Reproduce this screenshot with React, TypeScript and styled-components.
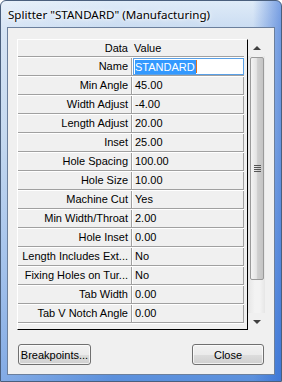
import styled, { createGlobalStyle } from 'styled-components';

const GlobalStyle = createGlobalStyle`
  html, body {
    margin: 0;
    padding: 0;
  }
  body {
    width: 282px;
    height: 382px;
    overflow: hidden;
    font-family: "Liberation Sans", Arial, sans-serif;
  }
`;

const properties: [string, string][] = [
  ['Name', 'STANDARD'],
  ['Min Angle', '45.00'],
  ['Width Adjust', '-4.00'],
  ['Length Adjust', '20.00'],
  ['Inset', '25.00'],
  ['Hole Spacing', '100.00'],
  ['Hole Size', '10.00'],
  ['Machine Cut', 'Yes'],
  ['Min Width/Throat', '2.00'],
  ['Hole Inset', '0.00'],
  ['Length Includes Ext...', 'No'],
  ['Fixing Holes on Tur...', 'No'],
  ['Tab Width', '0.00'],
  ['Tab V Notch Angle', '0.00'],
];

export default function App() {
  return (
    <>
      <GlobalStyle />
      <Window>
        <TitleBar>Splitter "STANDARD" (Manufacturing)</TitleBar>
        <Client>
          <PropertyBox>
            <Grid>
              <HeaderRow>
                <HeaderLabel>Data</HeaderLabel>
                <HeaderValue>Value</HeaderValue>
              </HeaderRow>
              {properties.map(([label, value], i) => (
                <Row key={label}>
                  <Label>{label}</Label>
                  <Divider />
                  {i === 0 ? (
                    <EditBox>
                      <Selected>{value}</Selected>
                      <Caret />
                    </EditBox>
                  ) : (
                    <Value>{value}</Value>
                  )}
                </Row>
              ))}
            </Grid>
            <ScrollBar>
              <ArrowButton>
                <Arrow $up />
              </ArrowButton>
              <Track>
                <Thumb>
                  <Grip>
                    <span />
                    <span />
                    <span />
                    <span />
                  </Grip>
                </Thumb>
              </Track>
              <ArrowButton>
                <Arrow />
              </ArrowButton>
            </ScrollBar>
          </PropertyBox>
          <ButtonRow>
            <Button $width={73}>Breakpoints...</Button>
            <Button $width={72}>Close</Button>
          </ButtonRow>
        </Client>
      </Window>
    </>
  );
}

const Window = styled.div`
  width: 282px;
  height: 382px;
  box-sizing: border-box;
  display: flex;
  flex-direction: column;
  border: 1px solid #4a5f7d;
  border-radius: 6px 6px 0 0;
  background:
    linear-gradient(to right, rgba(255, 255, 255, 0.25) 0%, rgba(255, 255, 255, 0) 40%, rgba(40, 100, 200, 0) 90%, rgba(40, 100, 210, 0.55) 100%),
    linear-gradient(to bottom, #dfebf8 0%, #c8dbf1 8%, #b3cdeb 35%, #86aee5 70%, #5a8fdc 100%);
`;

const TitleBar = styled.div`
  height: 26px;
  flex: none;
  display: flex;
  align-items: center;
  padding-left: 7px;
  font-family: "Noto Sans", "Open Sans", sans-serif;
  font-size: 11.6px;
  color: #000;
  text-shadow: 0 0 6px #fff, 0 0 3px #fff;
  white-space: nowrap;
`;

const Client = styled.div`
  flex: 1;
  margin: 0 6px 6px 6px;
  border: 1px solid #6b7f9c;
  background: #f0f0f0;
  padding: 11px 9px 9px 9px;
  display: flex;
  flex-direction: column;
`;

const PropertyBox = styled.div`
  display: flex;
  width: 248px;
  height: 291px;
  flex: none;
`;

const Grid = styled.div`
  flex: 1;
  box-sizing: border-box;
  border-top: 1px solid #fff;
  border-left: 1px solid #fff;
  border-right: 1px solid #000;
  border-bottom: 1px solid #000;
  font-size: 11px;
  color: #000;
`;

const HeaderRow = styled.div`
  display: grid;
  grid-template-columns: 113px 111px;
  width: 226px;
  height: 16px;
  align-items: center;
  border-bottom: 1px solid #a0a0a0;
`;

const HeaderLabel = styled.div`
  text-align: right;
  padding-right: 3px;
`;

const HeaderValue = styled.div`
  padding-left: 3px;
`;

const Row = styled.div`
  display: grid;
  grid-template-columns: 113px 2px 111px;
  width: 226px;
  height: 17px;
  border-top: 1px solid #fff;
  border-bottom: 1px solid #a0a0a0;
  align-items: stretch;
  &:last-child {
    box-shadow: 0 1px 0 #fff;
  }
`;

const Label = styled.div`
  text-align: right;
  padding-right: 3px;
  line-height: 17px;
  white-space: nowrap;
  overflow: hidden;
`;

const Divider = styled.div`
  border-left: 1px solid #a0a0a0;
  border-right: 1px solid #fff;
  box-sizing: border-box;
`;

const Value = styled.div`
  padding-left: 2px;
  line-height: 17px;
  border-right: 1px solid #a0a0a0;
  white-space: nowrap;
`;

const EditBox = styled.div`
  display: flex;
  align-items: center;
  box-sizing: border-box;
  background: #fff;
  border: 1px solid #5aa0e6;
  padding-left: 1px;
`;

const Selected = styled.span`
  background: #3399ff;
  color: #fff;
  line-height: 14px;
  padding-right: 1px;
`;

const Caret = styled.span`
  width: 1px;
  height: 13px;
  background: #e0701e;
`;

const ScrollBar = styled.div`
  width: 17px;
  display: flex;
  flex-direction: column;
  background: #f0f0f0;
`;

const ArrowButton = styled.div`
  height: 17px;
  flex: none;
  display: flex;
  align-items: center;
  justify-content: center;
`;

const Arrow = styled.div<{ $up?: boolean }>`
  width: 0;
  height: 0;
  border-left: 4px solid transparent;
  border-right: 4px solid transparent;
  ${(p) => (p.$up ? 'border-bottom: 4px solid #404040;' : 'border-top: 4px solid #404040;')}
`;

const Track = styled.div`
  flex: 1;
  padding: 1px 1px 33px 2px;
  background: linear-gradient(to right, #e6e6e6, #f3f3f3 40%, #f3f3f3 70%, #e6e6e6);
`;

const Thumb = styled.div`
  height: 100%;
  box-sizing: border-box;
  border: 1px solid #9a9a9a;
  border-radius: 2px;
  background: linear-gradient(to right, #f4f4f4 0%, #e4e4e4 45%, #cfcfcf 55%, #c4c4c4 100%);
  display: flex;
  align-items: center;
  justify-content: center;
`;

const Grip = styled.div`
  display: flex;
  flex-direction: column;
  gap: 1px;
  span {
    display: block;
    width: 7px;
    height: 1px;
    background: #555;
  }
`;

const ButtonRow = styled.div`
  margin-top: 14px;
  display: flex;
  justify-content: space-between;
  width: 247px;
  padding-left: 1px;
  box-sizing: border-box;
`;

const Button = styled.div<{ $width: number }>`
  width: ${(p) => p.$width}px;
  height: 21px;
  box-sizing: border-box;
  border: 1px solid #707070;
  border-radius: 3px;
  background: linear-gradient(to bottom, #f2f2f2 0%, #ebebeb 50%, #dddddd 51%, #cfcfcf 100%);
  box-shadow: inset 0 0 0 1px rgba(255, 255, 255, 0.7);
  display: flex;
  align-items: center;
  justify-content: center;
  font-size: 11px;
  color: #000;
`;
